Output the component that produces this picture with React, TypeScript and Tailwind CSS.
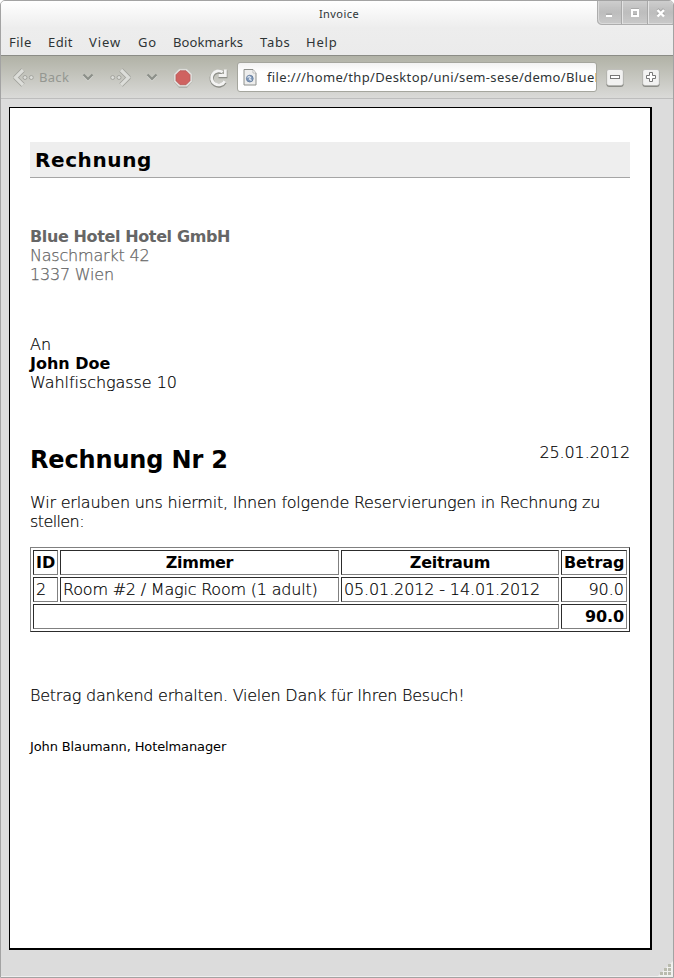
import type { ReactNode } from "react";

const MENU = [
  { label: "File", box: "w-[39px] tracking-[0.5px]" },
  { label: "Edit", box: "w-[41px] tracking-[0.4px]" },
  { label: "View", box: "w-[49px] tracking-[0.9px]" },
  { label: "Go", box: "w-[35px] tracking-[0.8px]" },
  { label: "Bookmarks", box: "w-[87px] tracking-[0.1px]" },
  { label: "Tabs", box: "w-[46px] tracking-[0.7px]" },
  { label: "Help", box: "w-[40px] tracking-[0.8px]" },
];

function WindowButtons() {
  return (
    <svg width="78" height="26" viewBox="0 0 78 26" className="block">
      <defs>
        <linearGradient id="wb" x1="0" y1="0" x2="0" y2="1">
          <stop offset="0" stopColor="#cfcfcf" />
          <stop offset="0.5" stopColor="#bdbdbd" />
          <stop offset="1" stopColor="#cacaca" />
        </linearGradient>
      </defs>
      <path d="M1 0V20Q1 24.500 5.500 24.500H77V0Z" fill="url(#wb)" />
      <path d="M1.500 0V19.500Q1.500 24.500 6 24.500H77" fill="none" stroke="#adadad" />
      <path d="M2.500 1V19.500Q3 23.500 6 23.500H76" fill="none" stroke="#dadada" />
      <path d="M26.500 1V24M52.500 1V24" stroke="#e3e3e3" strokeWidth="1" />
      <path d="M25.500 1V24M51.500 1V24" stroke="#a9a9a9" strokeWidth="1" />
      <g stroke="#999" fill="none" transform="translate(0 -1)" opacity="0.6">
        <path d="M10 15.500H16" strokeWidth="2" />
        <rect x="36" y="10" width="6" height="6" strokeWidth="2" />
        <path d="M61.500 10L68 16M68 10L61.500 16" strokeWidth="3" />
      </g>
      <g stroke="#fff" fill="none">
        <path d="M10 16H16" strokeWidth="2" />
        <rect x="36" y="10" width="6" height="6" strokeWidth="2" />
        <path d="M61.500 10L68 16.500M68 10L61.500 16.500" strokeWidth="2.400" />
      </g>
    </svg>
  );
}

function Arrow({ flip = false }: { flip?: boolean }) {
  return (
    <svg width="22" height="20" viewBox="0 0 22 20" className={flip ? "block -scale-x-100" : "block"}>
      <path d="M11 2L3.500 9.500L11 17" fill="none" stroke="#a0a19b" strokeWidth="4.800" strokeLinejoin="round" />
      <path d="M11 2L3.500 9.500L11 17" fill="none" stroke="#dcddd9" strokeWidth="3.200" />
      <circle cx="13" cy="9.500" r="2" fill="#dcddd9" stroke="#a3a49e" />
      <circle cx="19.300" cy="9.500" r="2" fill="#dcddd9" stroke="#a3a49e" />
    </svg>
  );
}

function Chevron() {
  return (
    <svg width="12" height="9" viewBox="0 0 12 9" className="block">
      <path d="M1.500 2.500L6 7L10.500 2.500" fill="none" stroke="#d8d9d5" strokeWidth="2" />
      <path d="M1.500 1.500L6 6L10.500 1.500" fill="none" stroke="#8c9089" strokeWidth="2.200" />
    </svg>
  );
}

function StopIcon() {
  return (
    <svg width="20" height="20" viewBox="0 0 20 20" className="block">
      <path d="M6 2H14L19 7V14L14 19.800H6L1 14V7Z" fill="#a3a49f" />
      <path d="M6 0.700H14L19.300 6V13.500L14 18.800H6L0.700 13.500V6Z" fill="#e2e2df" stroke="#babbb5" strokeWidth="0.800" />
      <path d="M7 2.800H13L17 6.800V12.700L13 16.700H7L3 12.700V6.800Z" fill="#cf6260" stroke="#b85b58" strokeWidth="0.800" />
    </svg>
  );
}

function ReloadIcon() {
  return (
    <svg width="22" height="22" viewBox="0 0 22 22" className="block">
      <g fill="none">
        <path d="M15.200 5.200A7 7 0 1 0 17.200 14.500M17.800 2.500V8.500H11" stroke="#8d8e88" strokeWidth="4.200" transform="translate(-0.500 0.700)" />
        <path d="M15.200 5.200A7 7 0 1 0 17.200 14.200M17.800 2.500V8.500H11" stroke="#f3f3f2" strokeWidth="2.900" transform="translate(-0.500 0)" />
      </g>
    </svg>
  );
}

function PageIcon() {
  return (
    <svg width="14" height="17" viewBox="0 0 14 17" className="block shrink-0">
      <path d="M1 0.500H10L13 4V16H1Z" fill="#eeeeed" stroke="#8e908c" />
      <path d="M10 1V4H13" fill="#fff" stroke="#aaa" strokeWidth="0.700" />
      <circle cx="6.800" cy="9.600" r="3.400" fill="#8299b9" stroke="#5d7799" strokeWidth="0.800" />
      <path d="M4.500 8.500L6 7.500L7.500 8.500L6.500 10L8.500 11.500" fill="none" stroke="#e2eaf3" strokeWidth="1.200" />
    </svg>
  );
}

function Zoom({ plus = false }: { plus?: boolean }) {
  return (
    <svg width="18" height="18" viewBox="0 0 18 18" className="block">
      <rect x="0.500" y="1" width="17" height="16.800" rx="2.500" fill="#777873" />
      <rect x="0.700" y="0.500" width="16.600" height="16" rx="2.300" fill="#f2f2f1" stroke="#b4b5b0" strokeWidth="0.700" />
      {plus ? (
        <path d="M7.500 3.500H10.500V6.500H13.500V9.500H10.500V12.500H7.500V9.500H4.500V6.500H7.500Z" fill="#fff" stroke="#777" />
      ) : (
        <rect x="4.500" y="6.500" width="9" height="3" fill="#fff" stroke="#777" />
      )}
    </svg>
  );
}

const GRIP = [[12, 4], [8, 8], [12, 8], [4, 12], [8, 12], [12, 12]];

function Cell({ children, className = "", span }: { children?: ReactNode; className?: string; span?: number }) {
  return (
    <td
      colSpan={span}
      className={`h-[25px] overflow-visible border border-t-[#2c2c2c] border-r-[#808080] border-b-[#808080] border-l-[#2c2c2c] px-[2px] py-0 leading-[19px] whitespace-nowrap ${className}`}
    >
      {children}
    </td>
  );
}

export default function App() {
  return (
    <div className="flex h-[978px] w-[674px] flex-col overflow-hidden rounded-t-[5px] border border-[#a3a3a3] bg-[#dcdcdc] font-['Noto_Sans',sans-serif] text-[#2e3436]">
      <header className="relative h-[54px] shrink-0 bg-linear-to-b from-white via-[#ededed] via-50% to-[#ebebeb]">
        <div className="flex h-[26px] items-center justify-center pb-[2px] pl-[4px] text-[11px] leading-none tracking-[0.45px]">Invoice</div>
        <div className="absolute -top-px -right-px"><WindowButtons /></div>
        <nav className="flex h-[28px] items-center pt-[2px] pl-[8px] text-[13px] leading-none">
          {MENU.map((m) => (
            <span key={m.label} className={`${m.box} shrink-0`}>{m.label}</span>
          ))}
        </nav>
      </header>

      <div className="flex h-[44px] shrink-0 items-center border-t border-b border-t-[#8b8c86] border-b-[#bdbdbd] bg-linear-to-b from-[#b1b2a6] to-[#dadad8]">
        <div className="ml-[11px] pt-px"><Arrow /></div>
        <span className="ml-[5px] w-[43px] text-[13px] leading-none tracking-[0.3px] text-[#949791]">Back</span>
        <Chevron />
        <div className="ml-[16px] pt-px"><Arrow flip /></div>
        <div className="ml-[14px]"><Chevron /></div>
        <div className="ml-[15px] pt-px"><StopIcon /></div>
        <div className="ml-[15px] pt-px"><ReloadIcon /></div>
        <div className="ml-[7px] flex h-[30px] w-[360px] shrink-0 items-center overflow-hidden rounded-[3px] border border-[#a5a69e] bg-linear-to-b from-[#f2f2f2] to-white to-30% pl-[5px]">
          <PageIcon />
          <span className="ml-[10px] text-[13px] leading-none tracking-[0.35px] whitespace-nowrap">file:///home/thp/Desktop/uni/sem-sese/demo/BlueH</span>
        </div>
        <div className="ml-[9px] pt-[2px]"><Zoom /></div>
        <div className="ml-[18px] pt-[2px]"><Zoom plus /></div>
      </div>

      <main className="mt-[8px] ml-[8px] h-[843px] w-[643px] shrink-0 border-t border-r-2 border-b-2 border-l border-black bg-white px-[20px] pt-[34px] font-['DejaVu_Sans_Light','DejaVu_Sans',sans-serif] text-[16px] leading-[19px] font-extralight text-black">
        <h1 className="h-[36px] border-b border-[#a5a5a5] bg-[#eeeeee] pl-[5px] font-['DejaVu_Sans',sans-serif] text-[20px] leading-[37px] font-bold tracking-[0.6px]">Rechnung</h1>
        <address className="mt-[49px] text-[#666] not-italic [-webkit-text-stroke:0.25px_#666]">
          <b className="block font-['DejaVu_Sans',sans-serif] font-bold tracking-[-0.38px] [-webkit-text-stroke:0px]">Blue Hotel Hotel GmbH</b>
          <div className="tracking-[-0.2px]">Naschmarkt 42</div>
          <div className="tracking-[-0.2px]">1337 Wien</div>
        </address>
        <address className="mt-[51px] not-italic [-webkit-text-stroke:0.2px_#000]">
          <div>An</div>
          <b className="block font-['DejaVu_Sans',sans-serif] font-bold [-webkit-text-stroke:0px]">John Doe</b>
          <div className="tracking-[-0.06px]">Wahlfischgasse 10</div>
        </address>
        <div className="mt-[51px] flex h-[50px] justify-between">
          <h2 className="mt-[1px] font-['DejaVu_Sans',sans-serif] text-[24px] leading-[32px] font-bold tracking-[-0.15px]">Rechnung Nr 2</h2>
          <span className="tracking-[-0.1px] [-webkit-text-stroke:0.2px_#000]">25.01.2012</span>
        </div>
        <p className="tracking-[-0.225px] whitespace-nowrap [-webkit-text-stroke:0.2px_#000]">Wir erlauben uns hiermit, Ihnen folgende Reservierungen in Rechnung zu<br /><span className="tracking-[-0.6px]">stellen:</span></p>
        <table className="mt-[16px] w-[600px] table-fixed border-separate border-spacing-[2px] border border-t-[#808080] border-r-[#2c2c2c] border-b-[#2c2c2c] border-l-[#808080]">
          <colgroup>
            <col className="w-[25px]" />
            <col className="w-[279px]" />
            <col className="w-[218px]" />
            <col className="w-[66px]" />
          </colgroup>
          <tbody>
            <tr>
              <Cell className="text-center font-['DejaVu_Sans',sans-serif] font-bold">ID</Cell>
              <Cell className="text-center font-['DejaVu_Sans',sans-serif] font-bold tracking-[-0.3px]">Zimmer</Cell>
              <Cell className="text-center font-['DejaVu_Sans',sans-serif] font-bold tracking-[-0.25px]">Zeitraum</Cell>
              <Cell className="text-center font-['DejaVu_Sans',sans-serif] font-bold tracking-[-0.1px]">Betrag</Cell>
            </tr>
            <tr className="[-webkit-text-stroke:0.2px_#000]">
              <Cell>2</Cell>
              <Cell className="tracking-[-0.2px]">Room #2 / Magic Room (1 adult)</Cell>
              <Cell className="tracking-[-0.13px]">05.01.2012 - 14.01.2012</Cell>
              <Cell className="text-right">90.0</Cell>
            </tr>
            <tr>
              <Cell span={3} />
              <Cell className="text-right font-['DejaVu_Sans',sans-serif] font-bold tracking-[-0.1px]">90.0</Cell>
            </tr>
          </tbody>
        </table>
        <p className="mt-[54px] tracking-[-0.24px] [-webkit-text-stroke:0.2px_#000]">Betrag dankend erhalten. Vielen Dank für Ihren Besuch!</p>
        <p className="mt-[32px] font-['DejaVu_Sans',sans-serif] text-[13px] font-normal tracking-[-0.12px]">John Blaumann, Hotelmanager</p>
      </main>
      <footer className="mt-auto flex h-[16px] justify-end border-b border-[#eeeeee]">
        <svg width="16" height="16" viewBox="0 0 16 16" className="block">
          <path d="M0 16L16 0V16Z" fill="#f0f0ee" />
          {GRIP.map(([x, y]) => (
            <rect key={`${x}-${y}`} x={x - 1} y={y - 1} width="3" height="3" fill="#b9bbae" />
          ))}
        </svg>
      </footer>
    </div>
  );
}
